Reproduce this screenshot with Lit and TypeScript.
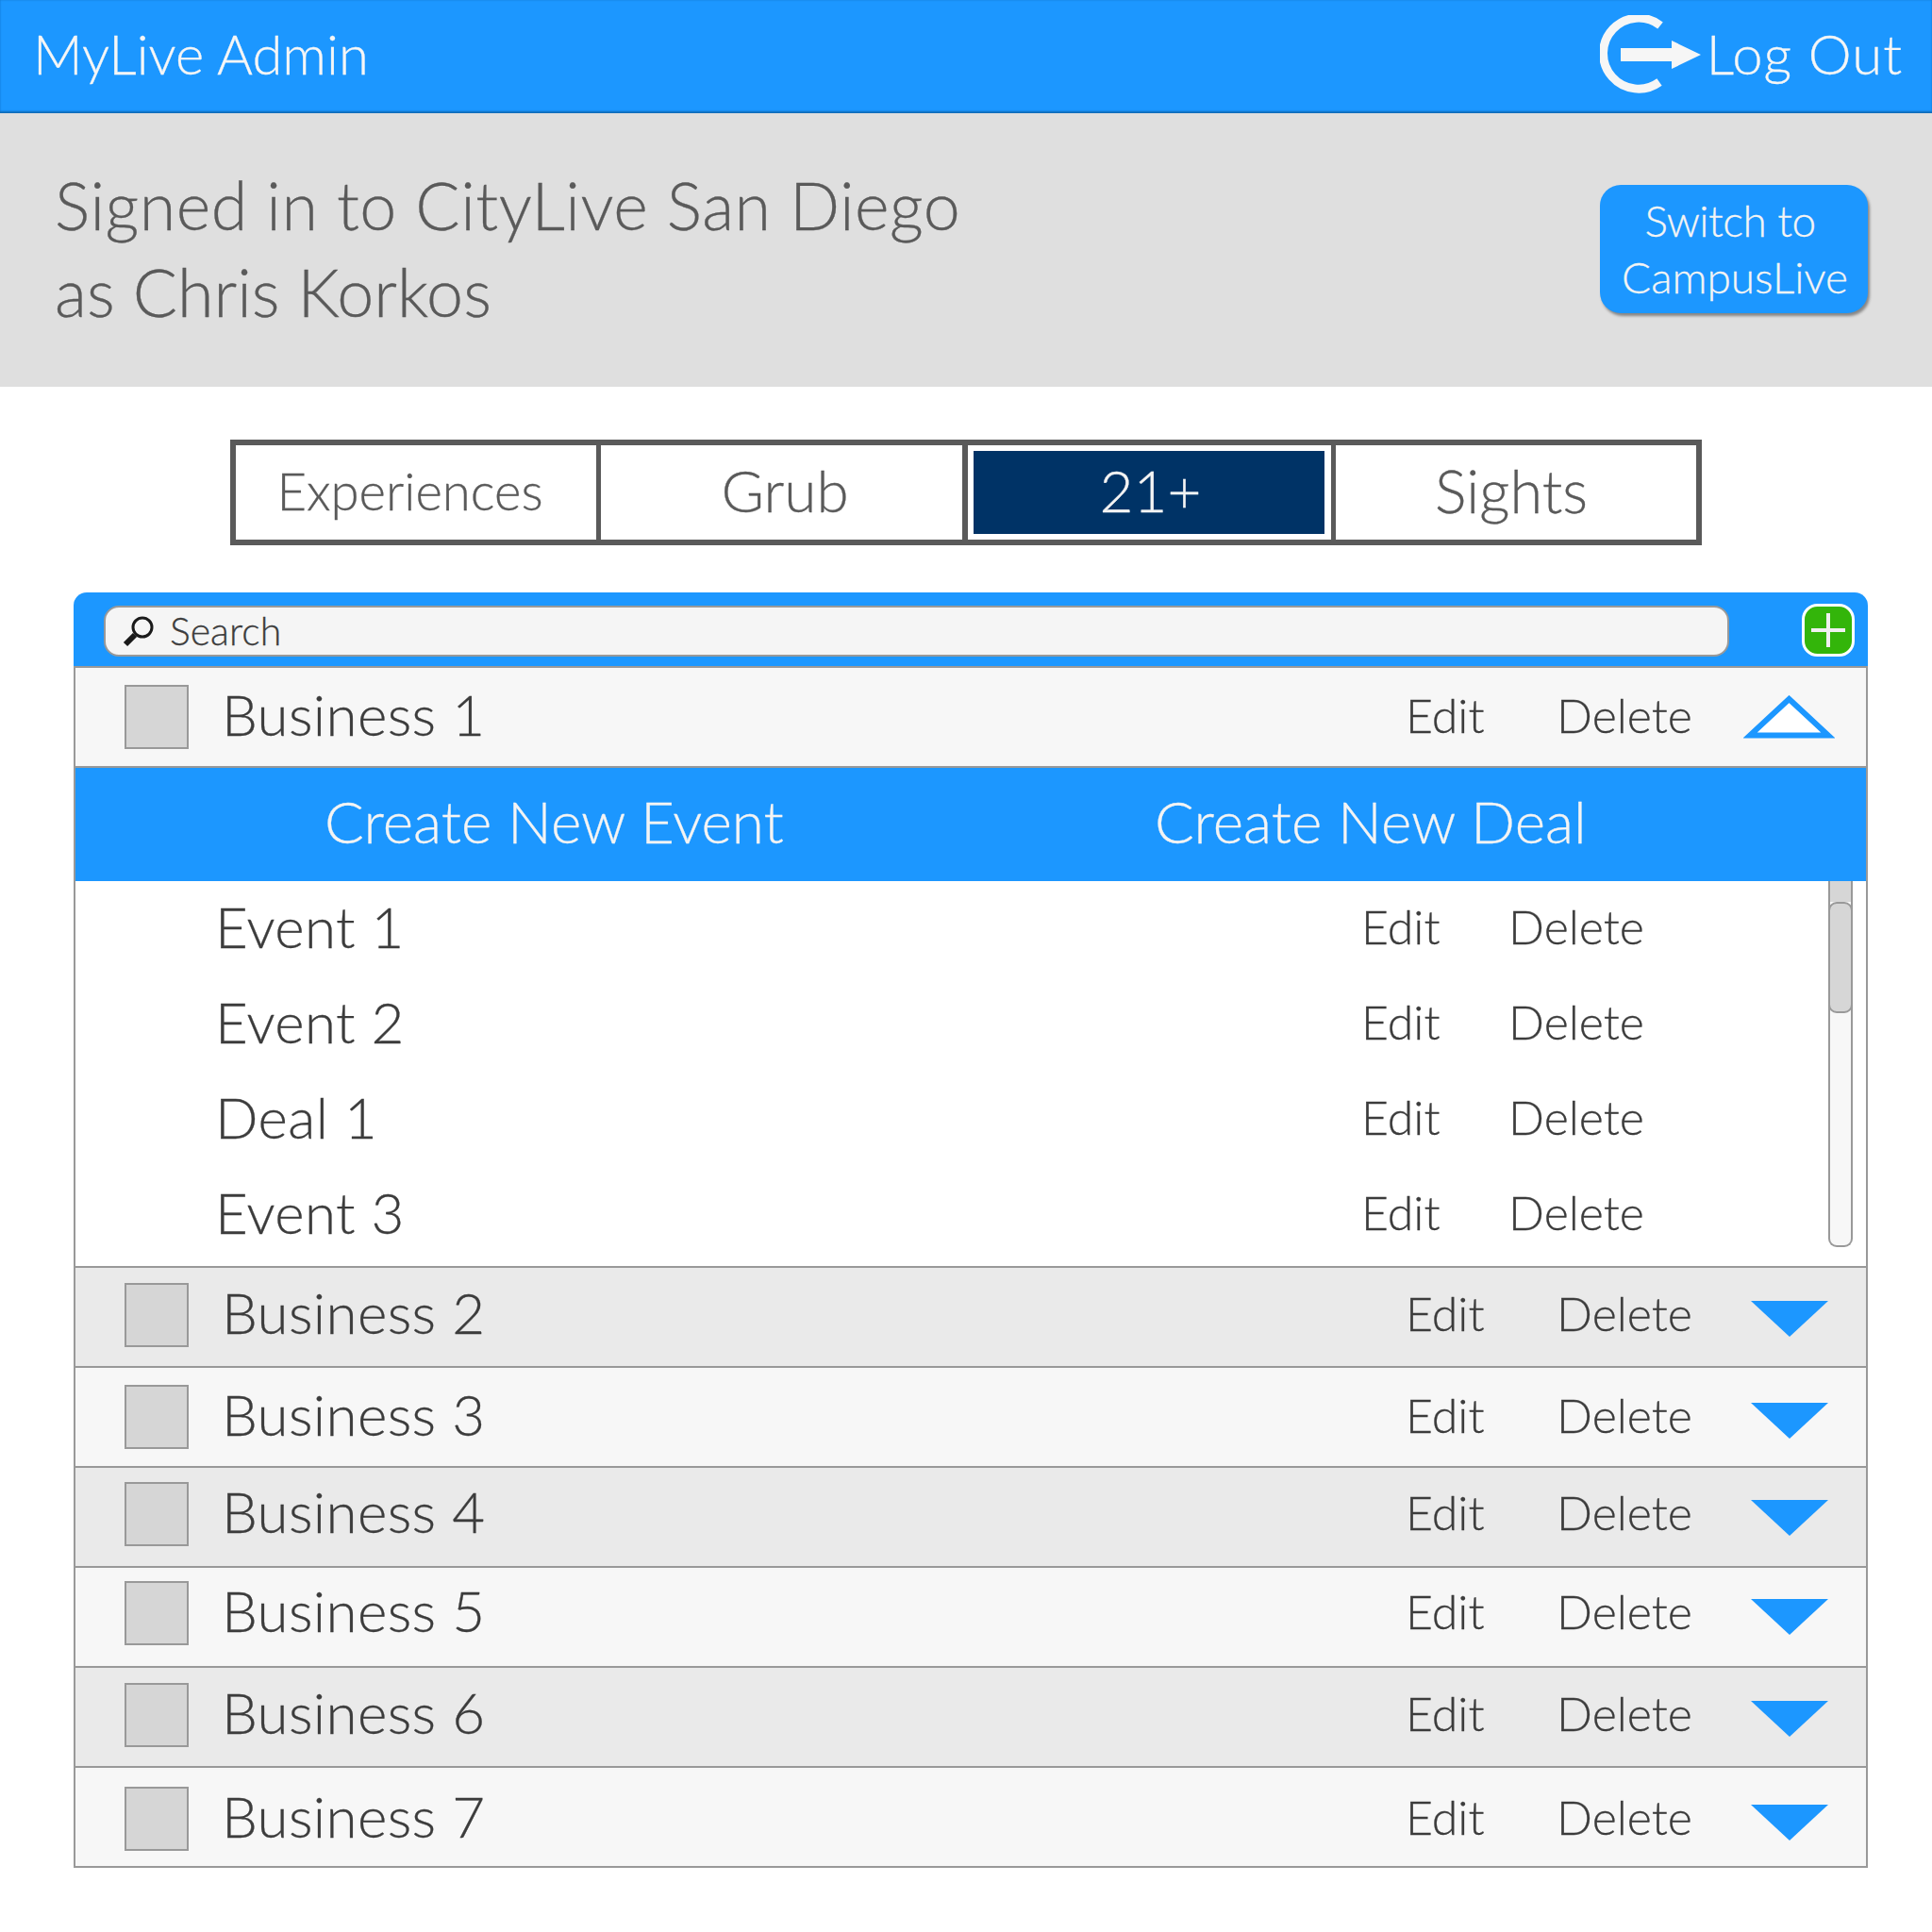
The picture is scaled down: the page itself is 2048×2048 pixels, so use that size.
import { LitElement, html, css, svg } from 'lit'
import { customElement } from 'lit/decorators.js'

const businesses = [
  { name: 'Business 2', nudge: -2 },
  { name: 'Business 3', nudge: 0 },
  { name: 'Business 4', nudge: -3 },
  { name: 'Business 5', nudge: -4 },
  { name: 'Business 6', nudge: -2 },
  { name: 'Business 7', nudge: 2 },
]

const subItems = ['Event 1', 'Event 2', 'Deal 1', 'Event 3']

const arrowDown = svg`<svg class="arrow down" width="97" height="38" viewBox="0 0 97 38"><path d="M8 0h82L49 38z" fill="#1c97ff"/></svg>`
const arrowUp = svg`<svg class="arrow" width="97" height="46" viewBox="0 0 97 46"><path d="M48.500 4L90 42.500H7z" fill="#fff" stroke="#1c97ff" stroke-width="6"/></svg>`

@customElement('app-root')
export class AppRoot extends LitElement {
  static styles = css`
    :host {
      display: block;
      width: 2048px;
      height: 2048px;
      background: #fff;
      font-family: Lato, "Liberation Sans", sans-serif;
      font-weight: 300;
      color: #3c3c3c;
      -webkit-text-stroke: 0.3px currentColor;
    }

    .header {
      display: flex;
      align-items: center;
      justify-content: space-between;
      box-sizing: border-box;
      height: 120px;
      padding: 0 31px 8px 35px;
      background: #1c97ff;
      box-shadow: inset 0 -3px 2px -1px #0f6cb8, inset 0 0 2px #1577c9;
      color: #f6f6f6;
      font-size: 58px;
    }

    .logout {
      display: flex;
      align-items: center;
      gap: 5px;
      letter-spacing: 1px;
    }

    .logout svg {
      margin-top: 4px;
    }

    .band {
      display: flex;
      align-items: flex-start;
      justify-content: space-between;
      box-sizing: border-box;
      height: 290px;
      padding: 54px 68px 0 58px;
      background: #dfdfdf;
    }

    .signed {
      margin-top: -3px;
      font-size: 70px;
      line-height: 92px;
      letter-spacing: 0.5px;
      color: #5a5a5a;
    }

    .signed span {
      letter-spacing: 0;
    }

    .switch {
      box-sizing: border-box;
      width: 284px;
      height: 136px;
      margin-top: 22px;
      padding-top: 8px;
      border-radius: 22px;
      background: #1c97ff;
      box-shadow: 2px 3px 3px rgba(0, 0, 0, 0.4);
      color: #f4f4f4;
      font-size: 46px;
      line-height: 60px;
      text-align: center;
    }

    .switch span {
      display: block;
      padding-right: 8px;
      letter-spacing: -0.5px;
    }

    .switch b {
      display: block;
      padding-left: 2px;
      font-weight: inherit;
    }

    .tabs {
      display: grid;
      grid-template-columns: 382px 388px 391px 387px;
      box-sizing: border-box;
      width: 1560px;
      height: 112px;
      margin: 56px 0 50px 244px;
      border: 6px solid #5a5a5a;
      color: #5a5a5a;
      font-size: 62px;
    }

    .tab {
      display: flex;
      align-items: center;
      justify-content: center;
      box-sizing: border-box;
      padding-bottom: 6px;
      border-left: 5px solid #5a5a5a;
    }

    .tab:nth-child(1) {
      padding-right: 13px;
      padding-bottom: 5px;
      border-left: 0;
      font-size: 54.500px;
    }

    .tab:nth-child(2) {
      padding-left: 7px;
    }

    .tab:nth-child(4) {
      padding-right: 10px;
      padding-bottom: 5px;
      font-size: 63px;
    }

    .tab.active {
      padding: 6px 7px 6px 6px;
      border-left-width: 6px;
    }

    .tab.active span {
      display: flex;
      flex: 1;
      align-self: stretch;
      align-items: center;
      justify-content: center;
      padding: 0 0 7px 3px;
      background: #003366;
      color: #f4f4f4;
    }

    .panel {
      width: 1902px;
      margin-left: 78px;
    }

    .head {
      display: flex;
      align-items: flex-start;
      justify-content: space-between;
      box-sizing: border-box;
      height: 78px;
      padding: 12px 14px 0 32px;
      border-radius: 14px 14px 0 0;
      background: #1c97ff;
    }

    .search {
      display: flex;
      align-items: center;
      gap: 16px;
      box-sizing: border-box;
      width: 1723px;
      height: 54px;
      margin-top: 2px;
      padding-left: 18px;
      border: 2px solid #999;
      border-radius: 16px;
      background: #f5f5f5;
      font-size: 41px;
      color: #3c3c3c;
    }

    .search span {
      padding-bottom: 2px;
    }

    .add {
      display: block;
    }

    .row {
      display: flex;
      align-items: center;
      box-sizing: border-box;
      height: 106px;
      padding: 0 33px 0 52px;
      border: 2px solid #999;
      border-width: 2px 2px 0;
      background: #f7f7f7;
    }

    .row.alt {
      background: #eaeaea;
    }

    .row.last {
      height: 108px;
      border-bottom-width: 2px;
    }

    .check {
      flex: none;
      box-sizing: border-box;
      width: 68px;
      height: 68px;
      margin-right: 35px;
      border: 2px solid #999;
      background: #d6d6d6;
    }

    .name {
      flex: 1;
      padding-bottom: 6px;
      font-size: 60px;
      letter-spacing: 0.4px;
    }

    .action {
      flex: none;
      padding-bottom: 5px;
      font-size: 50px;
    }

    .row .edit {
      width: 160px;
      margin-left: -1px;
    }

    .row .delete {
      width: 198px;
    }

    .arrow {
      display: block;
      flex: none;
    }

    .arrow.down {
      margin-top: 8px;
    }

    .create {
      display: flex;
      align-items: center;
      box-sizing: border-box;
      height: 122px;
      padding: 0 0 8px 264px;
      border: 2px solid #999;
      border-width: 2px 2px 0;
      background: #1c97ff;
      color: #f4f4f4;
      font-size: 62px;
    }

    .create span:first-child {
      width: 880px;
    }

    .subs {
      position: relative;
      box-sizing: border-box;
      height: 408px;
      border: 2px solid #999;
      border-width: 0 2px;
      background: #fff;
    }

    .sub {
      display: flex;
      align-items: center;
      box-sizing: border-box;
      height: 101px;
      padding-left: 148px;
    }

    .sub .name {
      flex: none;
      width: 1215px;
    }

    .sub .edit {
      width: 156px;
    }

    .scrollbar {
      position: absolute;
      top: 0;
      right: 14px;
      box-sizing: border-box;
      width: 26px;
      height: 388px;
      border: 2px solid #999;
      border-top: 0;
      border-radius: 0 0 9px 9px;
      background: #f7f7f7;
    }

    .scroll-above {
      height: 22px;
      background: #d6d6d6;
    }

    .thumb {
      box-sizing: border-box;
      height: 118px;
      margin: 0 -2px;
      border: 2px solid #999;
      border-radius: 9px;
      background: #d6d6d6;
    }
  `

  renderRow(name: string, arrow: unknown, rowClass = '', nudge = 0) {
    const shift = `margin-top:${nudge * 2}px`
    return html`
      <div class="row ${rowClass}">
        <div class="check" style=${shift}></div>
        <div class="name" style=${shift}>${name}</div>
        <div class="action edit" style=${shift}>Edit</div>
        <div class="action delete" style=${shift}>Delete</div>
        <div style=${shift}>${arrow}</div>
      </div>
    `
  }

  render() {
    return html`
      <div class="header">
        <div>MyLive Admin</div>
        <div class="logout">
          <svg width="108" height="84" viewBox="0 0 108 84">
            <path d="M64 11A37.500 37.500 0 1 0 63 71" fill="none" stroke="#f6f6f6" stroke-width="9"/>
            <path d="M22 35h54V27l31 15-31 15V49H22z" fill="#f6f6f6"/>
          </svg>
          <span>Log Out</span>
        </div>
      </div>

      <div class="band">
        <div class="signed">Signed in to CityLive San Diego<br /><span>as Chris Korkos</span></div>
        <div class="switch"><span>Switch to</span><b>CampusLive</b></div>
      </div>

      <div class="tabs">
        <div class="tab">Experiences</div>
        <div class="tab">Grub</div>
        <div class="tab active"><span>21+</span></div>
        <div class="tab">Sights</div>
      </div>

      <div class="panel">
        <div class="head">
          <div class="search">
            <svg width="34" height="34" viewBox="0 0 34 34">
              <circle cx="21" cy="13" r="10" fill="none" stroke="#1a1a1a" stroke-width="3"/>
              <path d="M13 21L3 31" stroke="#1a1a1a" stroke-width="6"/>
            </svg>
            <span>Search</span>
          </div>
          <svg class="add" width="56" height="56" viewBox="0 0 56 56">
            <rect x="1.500" y="1.500" width="53" height="53" rx="15" fill="#33b50a" stroke="#fff" stroke-width="3"/>
            <path d="M28 10v36M10 28h36" stroke="#f0f0f0" stroke-width="4"/>
          </svg>
        </div>

        ${this.renderRow('Business 1', arrowUp)}

        <div class="create">
          <span>Create New Event</span>
          <span>Create New Deal</span>
        </div>

        <div class="subs">
          ${subItems.map(item => html`
            <div class="sub">
              <div class="name">${item}</div>
              <div class="action edit">Edit</div>
              <div class="action">Delete</div>
            </div>
          `)}
          <div class="scrollbar">
            <div class="scroll-above"></div>
            <div class="thumb"></div>
          </div>
        </div>

        ${businesses.map((b, i) => this.renderRow(
          b.name,
          arrowDown,
          `${i % 2 === 0 ? 'alt' : ''} ${i === businesses.length - 1 ? 'last' : ''}`,
          b.nudge
        ))}
      </div>
    `
  }
}
